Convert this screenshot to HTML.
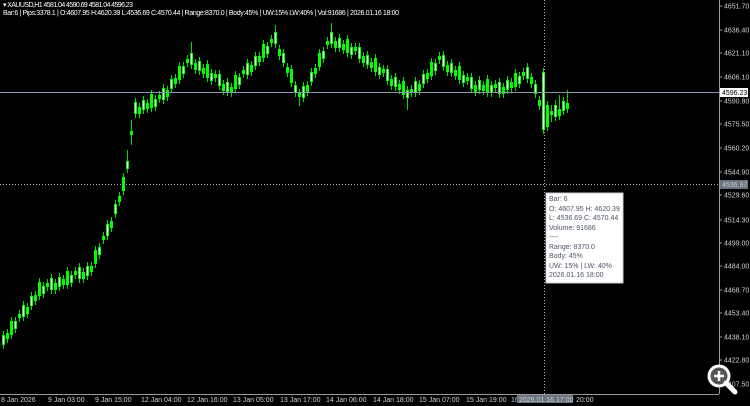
<!DOCTYPE html>
<html><head><meta charset="utf-8"><style>
html,body{margin:0;padding:0;background:#000;width:750px;height:406px;overflow:hidden}
svg{display:block}
text{font-family:"Liberation Sans",sans-serif;font-size:7px}
.ax{fill:#d0d0d0}
</style></head><body>
<svg width="750" height="406" viewBox="0 0 750 406" xmlns="http://www.w3.org/2000/svg">
<rect width="750" height="406" fill="#000"/>
<g shape-rendering="crispEdges" fill="none">
<path stroke="#00e000" stroke-width="1" d="M3.5 331V349M7.5 329V343M11.5 317V339M15.5 317V333M19.5 310V322M23.5 301V321M27.5 303V318M31.5 292V310M35.5 291V305M39.5 278V300M43.5 282V298M47.5 279V291M51.5 274V294M55.5 279V294M59.5 273V291M63.5 275V289M67.5 267V289M71.5 271V287M75.5 267V279M79.5 263V283M83.5 268V283M87.5 262V280M91.5 262V276M95.5 246V268M99.5 243V259M103.5 232V244M107.5 220V240M111.5 217V232M115.5 200V218M119.5 192V206M123.5 173V195M127.5 150V173M131.5 120V145M135.5 98V118M139.5 103V118M143.5 96V114M147.5 99V113M151.5 90V112M155.5 95V111M159.5 91V103M163.5 84V104M167.5 86V101M171.5 75V93M175.5 74V88M179.5 62V84M183.5 62V78M187.5 55V67M191.5 42V69M195.5 59V74M199.5 57V75M203.5 64V78M207.5 60V82M211.5 69V85M215.5 70V82M219.5 70V90M223.5 80V95M227.5 78V96M231.5 83V97M235.5 71V93M239.5 73V89M243.5 66V78M247.5 59V79M251.5 61V76M255.5 52V70M259.5 52V66M263.5 40V62M267.5 42V58M271.5 35V47M275.5 25V48M279.5 45V60M283.5 49V67M287.5 63V77M291.5 65V87M295.5 81V97M299.5 89V106M303.5 82V102M307.5 81V96M311.5 68V86M315.5 64V78M319.5 49V71M323.5 47V63M327.5 37V49M331.5 23V48M335.5 37V52M339.5 34V52M343.5 40V54M347.5 35V57M351.5 43V59M355.5 43V55M359.5 43V63M363.5 52V67M367.5 51V69M371.5 58V72M375.5 54V76M379.5 63V79M383.5 65V77M387.5 65V85M391.5 75V90M395.5 73V91M399.5 80V94M403.5 77V99M407.5 86V110M411.5 85V97M415.5 77V97M419.5 80V95M423.5 70V88M427.5 69V83M431.5 58V80M435.5 59V75M439.5 52V64M443.5 51V71M447.5 61V76M451.5 59V77M455.5 66V80M459.5 62V84M463.5 71V87M467.5 73V85M471.5 73V93M475.5 81V96M479.5 76V94M483.5 81V95M487.5 75V97M491.5 81V97M495.5 80V92M499.5 78V98M503.5 83V98M507.5 76V94M511.5 78V92M515.5 69V91M519.5 72V88M523.5 68V80M527.5 63V83M531.5 73V88M535.5 80V98M539.5 96V110M543.5 68V134M547.5 101V131M551.5 105V122M555.5 100V121M559.5 95V120M563.5 97V115M567.5 90V113"/>
<path stroke="#00ff00" stroke-width="3" d="M3.5 335V345M7.5 333V339M11.5 321V335M15.5 321V329M19.5 314V318M23.5 305V317M27.5 307V314M31.5 296V306M35.5 295V301M39.5 282V296M43.5 286V294M47.5 283V287M51.5 278V290M55.5 283V290M59.5 277V287M63.5 279V285M67.5 271V285M71.5 275V283M75.5 271V275M79.5 267V279M83.5 272V279M87.5 266V276M91.5 266V272M95.5 250V264M99.5 247V255M103.5 236V240M107.5 224V236M111.5 221V228M115.5 204V214M119.5 196V202M123.5 177V191M127.5 161V169M131.5 131V135M135.5 102V114M139.5 107V114M143.5 100V110M147.5 103V109M151.5 94V108M155.5 99V107M159.5 95V99M163.5 88V100M167.5 90V97M171.5 79V89M175.5 78V84M179.5 66V80M183.5 66V74M187.5 59V63M191.5 53V65M195.5 63V70M199.5 61V71M203.5 68V74M207.5 64V78M211.5 73V81M215.5 74V78M219.5 74V86M223.5 84V91M227.5 82V92M231.5 87V93M235.5 75V89M239.5 77V85M243.5 70V74M247.5 63V75M251.5 65V72M255.5 56V66M259.5 56V62M263.5 44V58M267.5 46V54M271.5 39V43M275.5 32V44M279.5 49V56M283.5 53V63M287.5 67V73M291.5 69V83M295.5 85V93M299.5 93V97M303.5 86V98M307.5 85V92M311.5 72V82M315.5 68V74M319.5 53V67M323.5 51V59M327.5 41V45M331.5 32V44M335.5 41V48M339.5 38V48M343.5 44V50M347.5 39V53M351.5 47V55M355.5 47V51M359.5 47V59M363.5 56V63M367.5 55V65M371.5 62V68M375.5 58V72M379.5 67V75M383.5 69V73M387.5 69V81M391.5 79V86M395.5 77V87M399.5 84V90M403.5 81V95M407.5 90V98M411.5 89V93M415.5 81V93M419.5 84V91M423.5 74V84M427.5 73V79M431.5 62V76M435.5 63V71M439.5 56V60M443.5 55V67M447.5 65V72M451.5 63V73M455.5 70V76M459.5 66V80M463.5 75V83M467.5 77V81M471.5 77V89M475.5 85V92M479.5 80V90M483.5 85V91M487.5 79V93M491.5 85V93M495.5 84V88M499.5 82V94M503.5 87V94M507.5 80V90M511.5 82V88M515.5 73V87M519.5 76V84M523.5 72V76M527.5 67V79M531.5 77V84M535.5 84V94M539.5 100V106M543.5 72V130M547.5 105V127M551.5 111V115M555.5 105V117M559.5 109V116M563.5 101V111M567.5 103V109"/>
<path stroke="#fff" stroke-width="1" d="M3.5 336V344M15.5 322V328M23.5 306V316M31.5 297V305M43.5 287V293M51.5 279V289M59.5 278V286M71.5 276V282M79.5 268V278M87.5 267V275M99.5 248V254M107.5 225V235M115.5 205V213M127.5 162V168M135.5 103V113M143.5 101V109M155.5 100V106M163.5 89V99M171.5 80V88M183.5 67V73M191.5 54V64M199.5 62V70M211.5 74V80M219.5 75V85M227.5 83V91M239.5 78V84M247.5 64V74M255.5 57V65M267.5 47V53M275.5 33V43M283.5 54V62M295.5 86V92M303.5 87V97M311.5 73V81M323.5 52V58M331.5 33V43M339.5 39V47M351.5 48V54M359.5 48V58M367.5 56V64M379.5 68V74M387.5 70V80M395.5 78V86M407.5 91V97M415.5 82V92M423.5 75V83M435.5 64V70M443.5 56V66M451.5 64V72M463.5 76V82M471.5 78V88M479.5 81V89M491.5 86V92M499.5 83V93M507.5 81V89M519.5 77V83M527.5 68V78M535.5 85V93M543.5 73V129M555.5 106V116M563.5 102V110"/>
</g>
<line x1="0" y1="92.5" x2="719" y2="92.5" stroke="#8796a8" stroke-width="1"/>
<line x1="0" y1="184.5" x2="719" y2="184.5" stroke="#aaa" stroke-dasharray="1,2"/>
<line x1="544.5" y1="0" x2="544.5" y2="394" stroke="#aaa" stroke-dasharray="1,2"/>
<line x1="719.5" y1="0" x2="719.5" y2="394" stroke="#9a9a9a"/>
<line x1="0" y1="394.5" x2="719" y2="394.5" stroke="#9a9a9a"/>
<text x="3" y="7" fill="#fff" textLength="130">▾ XAUUSD,H1  4581.04 4590.69 4581.04 4596.23</text>
<text x="3" y="15" fill="#fff" textLength="396">Bar:6 | Pips:3378.1 | O:4607.95 H:4620.39 L:4536.69 C:4570.44 | Range:8370.0 | Body:45% | UW:15% LW:40% | Vol:91686 | 2026.01.16 18:00</text>
<g class="ax">
<g stroke="#9a9a9a"><path d="M719 6h3M719 30h3M719 53h3M719 77h3M719 101h3M719 124h3M719 148h3M719 172h3M719 195h3M719 220h3M719 243h3M719 266h3M719 290h3M719 313h3M719 337h3M719 360h3M719 384h3"/></g>
<text x="724" y="8.5">4651.70</text><text x="724" y="32.5">4636.40</text><text x="724" y="55.5">4621.10</text><text x="724" y="79.5">4606.10</text><text x="724" y="103.5">4590.80</text><text x="724" y="126.5">4575.50</text><text x="724" y="150.5">4560.20</text><text x="724" y="174.5">4544.90</text><text x="724" y="197.5">4529.60</text><text x="724" y="222.5">4514.30</text><text x="724" y="245.5">4499.00</text><text x="724" y="268.5">4484.00</text><text x="724" y="292.5">4468.70</text><text x="724" y="315.5">4453.40</text><text x="724" y="339.5">4438.10</text><text x="724" y="362.5">4422.80</text><text x="724" y="386.5">4407.50</text>
<text x="1" y="402">8 Jan 2026</text><text x="48" y="402">9 Jan 03:00</text><text x="95" y="402">9 Jan 15:00</text><text x="141" y="402">12 Jan 04:00</text><text x="187" y="402">12 Jan 16:00</text><text x="233" y="402">13 Jan 05:00</text><text x="280" y="402">13 Jan 17:00</text><text x="326" y="402">14 Jan 06:00</text><text x="373" y="402">14 Jan 18:00</text><text x="419" y="402">15 Jan 07:00</text><text x="466" y="402">15 Jan 19:00</text><text x="511" y="402">16</text><text x="576" y="402">20:00</text>
</g>
<rect x="720" y="88" width="28" height="9" fill="#fff"/>
<text x="722" y="95" fill="#000">4596.23</text>
<rect x="720" y="180" width="28" height="9" fill="#6a7480"/>
<text x="722" y="187" fill="#ccc">4536.97</text>
<rect x="546" y="193" width="77" height="90" fill="#fff" stroke="#ccc"/>
<g fill="#4a5666">
<text x="549" y="201">Bar: 6</text>
<text x="549" y="211">O: 4607.95  H: 4620.39</text>
<text x="549" y="220">L: 4536.69  C: 4570.44</text>
<text x="549" y="230">Volume: 91686</text>
<text x="549" y="239">----</text>
<text x="549" y="249">Range: 8370.0</text>
<text x="549" y="258">Body: 45%</text>
<text x="549" y="268">UW: 15% | LW: 40%</text>
<text x="549" y="277">2026.01.16 18:00</text>
</g>
<rect x="517" y="395" width="56" height="8" fill="#6a7480"/>
<text x="519" y="402" fill="#ccc">2026.01.16 17:00</text>
<circle cx="719" cy="376" r="10" fill="#555" stroke="#fff" stroke-width="3"/>
<line x1="726" y1="383" x2="735" y2="392" stroke="#fff" stroke-width="5" stroke-linecap="round"/>
<line x1="714" y1="376" x2="724" y2="376" stroke="#fff" stroke-width="2.5"/>
<line x1="719" y1="371" x2="719" y2="381" stroke="#fff" stroke-width="2.5"/>
</svg>
</body></html>
